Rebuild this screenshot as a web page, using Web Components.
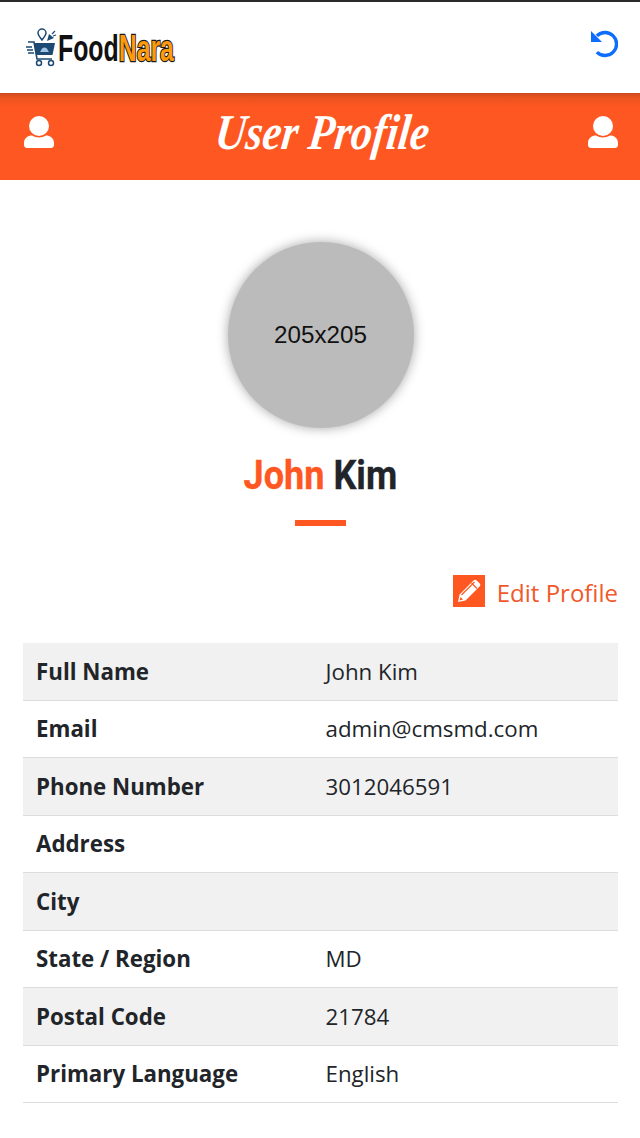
<!DOCTYPE html>
<html>
<head>
<meta charset="utf-8">
<title>User Profile</title>
<style>
  html, body { margin: 0; padding: 0; background: #fff; }
  body { font-family: "Open Sans", sans-serif; color: #212529; }
</style>
</head>
<body>
<app-header></app-header>
<title-bar>User Profile</title-bar>
<profile-head first="John" last="Kim"></profile-head>
<edit-link>Edit Profile</edit-link>
<info-table>
  <info-row label="Full Name" value="John Kim"></info-row>
  <info-row label="Email" value="admin@cmsmd.com"></info-row>
  <info-row label="Phone Number" value="3012046591"></info-row>
  <info-row label="Address"></info-row>
  <info-row label="City"></info-row>
  <info-row label="State / Region" value="MD"></info-row>
  <info-row label="Postal Code" value="21784"></info-row>
  <info-row label="Primary Language" value="English"></info-row>
</info-table>

<script>
const userIcon = `
  <svg width="32" height="32" viewBox="0 0 32 32" fill="#fff">
    <circle cx="16" cy="10" r="10"/>
    <path d="M1 29v-2c0-5 4-7.500 8-7.500 2 1.300 4.500 2 7 2s5-.7 7-2c4 0 8 2.500 8 7.500v2c0 1.600-1.200 3-3 3H4c-1.800 0-3-1.400-3-3z"/>
  </svg>`;

customElements.define("app-header", class extends HTMLElement {
  constructor() {
    super();
    this.shadow = this.attachShadow({ mode: "open" });
  }

  connectedCallback() {
    this.shadow.innerHTML = `
      <style>
        :host {
          display: flex;
          box-sizing: border-box;
          height: 93px;
          border-top: 2px solid #2a2a2a;
          padding: 0 22px 0 26px;
          align-items: center;
          justify-content: space-between;
          background: #fff;
        }
        .logo { display: flex; align-items: center; gap: 1px; }
        .word {
          font-family: "Liberation Sans", sans-serif;
          font-weight: 700;
          font-size: 36px;
          line-height: 40px;
          color: #111;
          display: inline-block;
          transform: scaleX(0.69);
          transform-origin: left center;
          width: 116px;
          white-space: nowrap;
          margin-top: 3px;
        }
        .word span {
          color: #ff9a0d;
          -webkit-text-stroke: 2.400px #1a1a1a;
          paint-order: stroke fill;
        }
        .back { display: block; margin-top: -9px; }
      </style>
      <div class="logo">
        <svg width="31" height="39" viewBox="0 0 31 39" fill="none" stroke="#1d4a73">
          <path d="M2 14h6l3 17h15" stroke-width="1.600"/>
          <path d="M8 15h21l-2.500 12H10z" fill="#1d4a73" stroke="none"/>
          <path d="M14 24h9l-1-1.500c-.6-2-2-3-3.500-3s-3 1-3.500 3z" fill="#9fc3e0" stroke="none"/>
          <path d="M0 19h6M1 22h6M2 25h6" stroke-width="1.300"/>
          <circle cx="13" cy="35" r="2.500" stroke-width="1.500"/>
          <circle cx="25" cy="35" r="2.500" stroke-width="1.500"/>
          <path d="M16 12c-3-4-4-5-4-7a4 4 0 0 1 8 0c0 2-1 3-4 7z" fill="#fff" stroke-width="1.500"/>
          <path d="M21 13l2-7 5 4z" fill="#1d4a73" stroke="none"/>
          <path d="M26 6l3-3M27 8l3-1" stroke-width="1.200"/>
        </svg>
        <div class="word">Food<span>Nara</span></div>
      </div>
      <svg class="back" width="30" height="30" viewBox="0 0 30 30" fill="none" stroke="#0d6efd" stroke-width="3.400">
        <path d="M8.900 7.900A11.500 11.500 0 1 1 8.900 24.100"/>
        <path d="M3 3v11h11z" fill="#0d6efd" stroke="none"/>
      </svg>
    `;
  }
});

customElements.define("title-bar", class extends HTMLElement {
  constructor() {
    super();
    this.shadow = this.attachShadow({ mode: "open" });
  }

  connectedCallback() {
    this.shadow.innerHTML = `
      <style>
        :host {
          display: flex;
          box-sizing: border-box;
          height: 87px;
          padding: 0 21px 9px 23px;
          align-items: center;
          justify-content: space-between;
          background: linear-gradient(#c74a1e 0, #e9531f 4px, #ff5722 14px);
        }
        svg { display: block; }
        .name {
          font-family: "Liberation Serif", serif;
          font-style: italic;
          font-weight: 700;
          font-size: 50px;
          line-height: 60px;
          color: #fff;
          transform: translateX(2px) scaleX(0.85) skewX(-8deg);
          white-space: nowrap;
          margin: 0 -30px;
        }
      </style>
      ${userIcon}
      <div class="name"><slot></slot></div>
      ${userIcon}
    `;
  }
});

customElements.define("profile-head", class extends HTMLElement {
  constructor() {
    super();
    this.shadow = this.attachShadow({ mode: "open" });
  }

  connectedCallback() {
    this.shadow.innerHTML = `
      <style>
        :host {
          display: flex;
          flex-direction: column;
          align-items: center;
          padding-top: 62px;
        }
        .avatar {
          width: 186px;
          height: 186px;
          margin-left: 1px;
          border-radius: 50%;
          background: #bbb;
          box-shadow: 0 0 12px rgba(0,0,0,.35);
          display: flex;
          align-items: center;
          justify-content: center;
          font-family: "Liberation Sans", sans-serif;
          font-size: 24.200px;
          color: #111;
        }
        h1 {
          margin: 23px 0 0;
          font-family: Roboto, sans-serif;
          font-weight: 700;
          font-size: 41px;
          line-height: 48px;
          color: #212529;
          transform: scaleX(.88);
          white-space: nowrap;
          -webkit-text-stroke: .3px currentColor;
        }
        h1 span { color: #ff5722; }
        .rule {
          width: 51px;
          height: 6px;
          margin-top: 21px;
          background: #ff5722;
        }
      </style>
      <div class="avatar">205x205</div>
      <h1><span>${this.getAttribute("first")}</span> ${this.getAttribute("last")}</h1>
      <div class="rule"></div>
    `;
  }
});

customElements.define("edit-link", class extends HTMLElement {
  constructor() {
    super();
    this.shadow = this.attachShadow({ mode: "open" });
  }

  connectedCallback() {
    this.shadow.innerHTML = `
      <style>
        :host {
          display: flex;
          align-items: center;
          justify-content: flex-end;
          gap: 12px;
          padding: 49px 22px 0 0;
          font-family: "Open Sans", sans-serif;
          font-size: 24px;
          line-height: 33px;
          color: #f0592a;
        }
        svg { display: block; margin-bottom: 3px; }
      </style>
      <svg width="32" height="32" viewBox="0 0 32 32">
        <rect width="32" height="32" fill="#ff5722"/>
        <path d="M5 27l1.600-7.500L20.500 5.600c1-1 2.300-1 3.200-.2l3 3c.9.900.8 2.200-.2 3.200L12.500 25.400z" fill="#fff"/>
        <path d="M18.500 8l5.500 5.500M8.500 20l13-13" stroke="#ff5722" stroke-width="1.200" fill="none"/>
        <path d="M7.500 22l2.500 2.500-3.500 1z" fill="#ff5722"/>
      </svg>
      <span><slot></slot></span>
    `;
  }
});

customElements.define("info-table", class extends HTMLElement {
  constructor() {
    super();
    this.shadow = this.attachShadow({ mode: "open" });
  }

  connectedCallback() {
    this.shadow.innerHTML = `
      <style>
        :host {
          display: block;
          margin: 33px 22px 0 23px;
        }
      </style>
      <slot></slot>
    `;
  }
});

customElements.define("info-row", class extends HTMLElement {
  constructor() {
    super();
    this.shadow = this.attachShadow({ mode: "open" });
  }

  connectedCallback() {
    this.shadow.innerHTML = `
      <style>
        :host {
          display: grid;
          grid-template-columns: 289.500px 1fr;
          box-sizing: border-box;
          height: 57.500px;
          padding: 0 13px;
          align-items: center;
          border-bottom: 1px solid #dcdcdc;
          font-family: "Open Sans", sans-serif;
          font-size: 22.300px;
          color: #212529;
        }
        :host(:nth-child(odd)) { background: #f1f1f1; }
        b { font-weight: 700; }
      </style>
      <b>${this.getAttribute("label")}</b>
      <span>${this.getAttribute("value") || ""}</span>
    `;
  }
});
</script>
</body>
</html>
